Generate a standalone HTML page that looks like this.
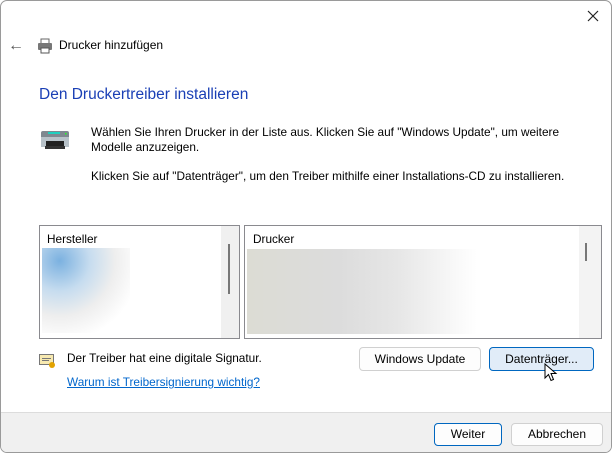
<!DOCTYPE html><html><head><style>
body{margin:0;width:614px;height:454px;background:#fff;position:relative;overflow:hidden;font-family:"Segoe UI","Liberation Sans",sans-serif;font-size:11.8px;color:#000}
.win{position:absolute;left:0;top:0;width:610px;height:451px;border:1px solid #9a9a9a;border-radius:7px;background:#fff;overflow:hidden}
.a{position:absolute;white-space:nowrap}
.foot{position:absolute;left:0;top:411px;width:100%;height:40px;background:#f0f0f0;border-top:1px solid #dcdcdc}
.btn{position:absolute;border:1px solid #d0d0d0;border-radius:4px;background:#fdfdfd;text-align:center;font-size:12px;box-sizing:border-box}
.list{position:absolute;border:1px solid #8a8a8f;background:#fff;box-sizing:border-box;overflow:hidden}
</style></head><body><div class="win">
<div class="a" style="left:7px;top:36px;font-size:16px;color:#555">&#8592;</div>
<svg class="a" style="left:36px;top:37px" width="16" height="16"><rect x="4" y="1" width="8" height="5" fill="#fff" stroke="#666"/><rect x="1" y="5" width="14" height="7" rx="1" fill="#777"/><rect x="4" y="10" width="8" height="5" fill="#fff" stroke="#555"/></svg>
<div class="a" style="left:58px;top:37px;font-size:12px">Drucker hinzufügen</div>
<svg class="a" style="left:586px;top:9px" width="12" height="12"><path d="M1 1 L11 11 M11 1 L1 11" stroke="#222" stroke-width="1.2"/></svg>
<div class="a" style="left:38px;top:85px;font-size:15.5px;color:#1a3fb5">Den Druckertreiber installieren</div>
<svg class="a" style="left:39px;top:128px" width="30" height="22"><rect x="1" y="2" width="28" height="13" rx="2" fill="#7f8890"/><rect x="8" y="3" width="12" height="2" fill="#1fd0c0"/><rect x="25" y="4" width="1.5" height="1.5" fill="#2f2"/><rect x="1" y="8" width="28" height="10" fill="#b8c2c9"/><rect x="6" y="12" width="18" height="5" fill="#222"/><rect x="5" y="17" width="20" height="3" fill="#333"/></svg>
<div class="a" style="left:90px;top:124px;line-height:15px">Wählen Sie Ihren Drucker in der Liste aus. Klicken Sie auf "Windows Update", um weitere<br>Modelle anzuzeigen.</div>
<div class="a" style="left:90px;top:168px">Klicken Sie auf "Datenträger", um den Treiber mithilfe einer Installations-CD zu installieren.</div>
<div class="list" style="left:38px;top:224px;width:201px;height:114px">
<div class="a" style="left:7px;top:6px">Hersteller</div>
<div class="a" style="left:2px;top:22px;width:88px;height:85px;background:radial-gradient(circle at 20% 15%,#7bb1e0 0,#c6dcef 30%,#eee 55%,#fff 80%)"></div>
<div class="a" style="left:181px;top:0;width:18px;height:112px;background:#f0f0f0"></div>
<div class="a" style="left:188px;top:18px;width:2px;height:50px;background:#777"></div></div>
<div class="list" style="left:243px;top:224px;width:358px;height:114px">
<div class="a" style="left:8px;top:6px">Drucker</div>
<div class="a" style="left:2px;top:23px;width:230px;height:85px;background:linear-gradient(90deg,#dcdcd4,#dcdcdc 40%,#e6e6e6 65%,#fff)"></div>
<div class="a" style="left:334px;top:0;width:22px;height:112px;background:#f3f3f3"></div>
<div class="a" style="left:340px;top:17px;width:2px;height:18px;background:#777"></div></div>
<svg class="a" style="left:38px;top:352px" width="16" height="16"><rect x="0.5" y="1.5" width="14" height="10" fill="#f7e9b0" stroke="#777"/><rect x="3" y="5" width="9" height="1" fill="#777"/><rect x="3" y="7" width="7" height="1" fill="#777"/><circle cx="13" cy="12" r="3" fill="#e3a300"/></svg>
<div class="a" style="left:66px;top:350px">Der Treiber hat eine digitale Signatur.</div>
<div class="a" style="left:66px;top:374px;color:#0066cc;text-decoration:underline">Warum ist Treibersignierung wichtig?</div>
<div class="btn" style="left:358px;top:346px;width:122px;height:24px;line-height:22px">Windows Update</div>
<div class="btn" style="left:488px;top:346px;width:105px;height:24px;line-height:22px;background:#e1ecf8;border-color:#0067c0">Datenträger...</div>
<svg class="a" style="left:543px;top:362px" width="14" height="20"><path d="M1 1 L1 15 L4.5 11.5 L7 17.5 L9.5 16.5 L7 10.5 L12 10.5 Z" fill="#fff" stroke="#000" stroke-width="1"/></svg>
<div class="foot"></div>
<div class="btn" style="left:433px;top:422px;width:68px;height:23px;line-height:21px;border-color:#0067c0">Weiter</div>
<div class="btn" style="left:510px;top:422px;width:92px;height:23px;line-height:21px">Abbrechen</div>
</div></body></html>
